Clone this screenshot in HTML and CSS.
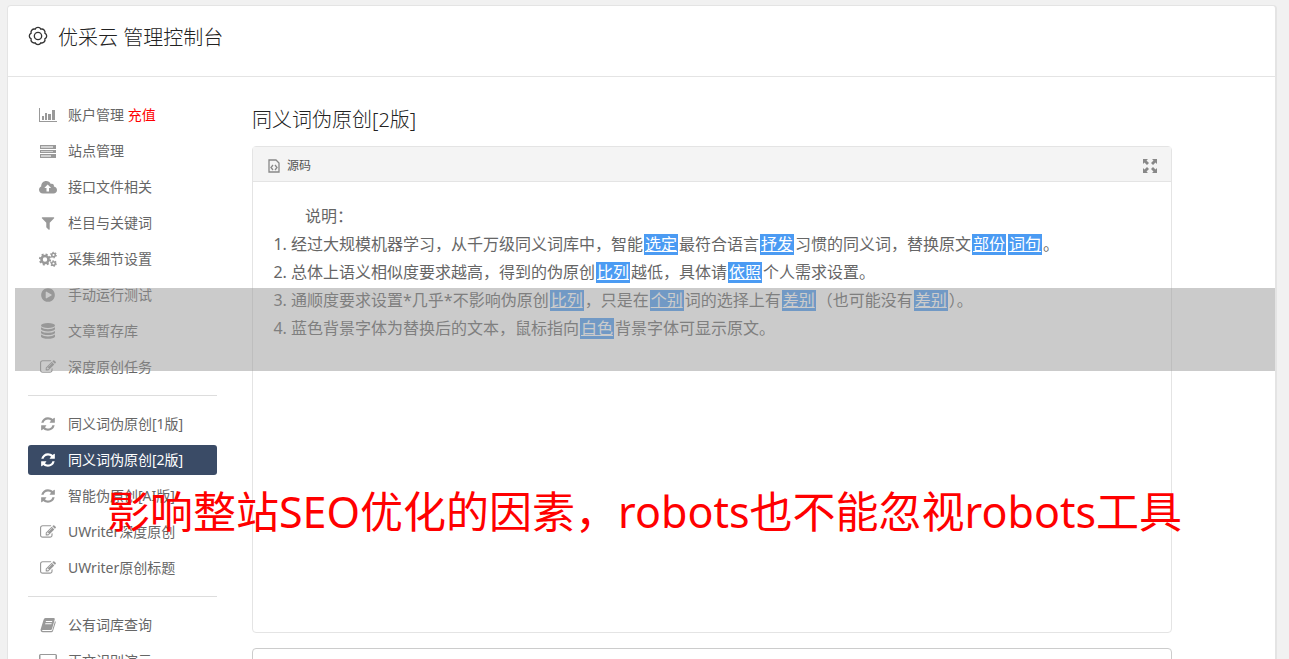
FILE: index.html
```html
<!DOCTYPE html>
<html lang="zh-CN">
<head>
<meta charset="utf-8">
<title>优采云 管理控制台</title>
<link rel="stylesheet" href="styles.css">
</head>
<body>
<svg class="symbols" aria-hidden="true">
  <symbol id="chart" viewBox="0 0 20 16"><path d="M1 1h1v13h17v1H1zM4 9h2v4H4zM7 6h2v7H7zM10 7h3v6h-3zM14 3h3v10h-3z"/></symbol>
  <symbol id="server" viewBox="0 0 20 16"><path opacity=".45" d="M2 2h16v4H2zM2 7h16v3H2zM2 11h16v4H2z"/><path fill-rule="evenodd" d="M2 2h16v4H2zM3 3h12v2H3zM2 7h16v3H2zM3 8h12v1H3zM2 11h16v4H2zM3 12h10v2H3z"/></symbol>
  <symbol id="cloud" viewBox="0 0 20 16"><path fill-rule="evenodd" d="M5 14.500C2.800 14.500 1 13 1 10.800C1 9.200 1.900 8 3.200 7.400C3.200 4.200 5.300 2 8.200 2C10.300 2 12 3.200 12.800 5C14.600 4.200 16.300 5.500 15.900 7.400C17.800 7.700 19 9.200 19 11C19 13 17.500 14.500 15.500 14.500ZM9.700 5.500L6.300 9H8.500V12.500H11V9H13.100Z"/></symbol>
  <symbol id="filter" viewBox="0 0 1792 1792"><path d="M1595 295q17 41-14 70l-493 493v742q0 42-39 59-13 5-25 5-27 0-45-19l-256-256q-19-19-19-45v-486l-493-493q-31-29-14-70 17-39 59-39h1280q42 0 59 39z"/></symbol>
  <symbol id="cogs" viewBox="0 0 20 16">
    <g fill="none" stroke="currentColor"><circle cx="7" cy="8.500" r="3.500" stroke-width="2.600"/><circle cx="7" cy="8.500" r="5.200" stroke-width="1.800" stroke-dasharray="2.040 2.040"/><circle cx="15.500" cy="4" r="1.800" stroke-width="1.500"/><circle cx="15.500" cy="4" r="2.800" stroke-width="1.100" stroke-dasharray="1.460 1.460"/><circle cx="15.500" cy="12.500" r="1.800" stroke-width="1.500"/><circle cx="15.500" cy="12.500" r="2.800" stroke-width="1.100" stroke-dasharray="1.460 1.460"/></g>
  </symbol>
  <symbol id="play" viewBox="0 0 1792 1792"><path d="M896 128q209 0 385.500 103t279.500 279.500 103 385.500-103 385.500-279.500 279.500-385.500 103-385.500-103-279.500-279.500-103-385.500 103-385.500 279.500-279.500 385.500-103zm384 823q32-18 32-55t-32-55l-544-320q-31-19-64-1-32 19-32 56v640q0 37 32 56 16 8 32 8 17 0 32-9z"/></symbol>
  <symbol id="database" viewBox="0 0 16 16"><ellipse cx="8" cy="2.500" rx="7" ry="2.500"/><path d="M1 4.300q2.500 1.900 7 1.900t7-1.900v2q-1.500 2.100-7 2.100t-7-2.100zM1 7.900q2.500 1.900 7 1.900t7-1.900v2q-1.500 2.100-7 2.100t-7-2.100zM1 11.500q2.500 1.900 7 1.900t7-1.900v2.200q-1.500 2.100-7 2.100t-7-2.100z"/></symbol>
  <symbol id="edit" viewBox="0 0 1792 1792"><path d="M888 1184l116-116-152-152-116 116v56h96v96h56zm440-720q-16-16-33 1l-350 350q-17 17-1 33t33-1l350-350q17-17 1-33zm80 594v190q0 119-84.500 203.500t-203.500 84.500h-832q-119 0-203.500-84.500t-84.500-203.500v-832q0-119 84.500-203.500t203.500-84.500h832q63 0 117 25 15 7 18 23 3 17-9 29l-49 49q-14 14-32 8-23-6-45-6h-832q-66 0-113 47t-47 113v832q0 66 47 113t113 47h832q66 0 113-47t47-113v-126q0-13 9-22l64-64q15-15 35-7t20 29zm-96-738l288 288-672 672h-288v-288zm444 132l-92 92-288-288 92-92q28-28 68-28t68 28l152 152q28 28 28 68t-28 68z"/></symbol>
  <symbol id="refresh" viewBox="0 0 1792 1792"><path d="M1639 1056q0 5-1 7-64 268-268 434.500t-478 166.500q-146 0-282.500-55t-243.500-157l-129 129q-19 19-45 19t-45-19-19-45v-448q0-26 19-45t45-19h448q26 0 45 19t19 45-19 45l-137 137q71 66 161 102t187 36q134 0 250-65t186-179q11-17 53-117 8-23 30-23h192q13 0 22.500 9.500t9.500 22.500zm25-800v448q0 26-19 45t-45 19h-448q-26 0-45-19t-19-45 19-45l138-138q-148-137-349-137-134 0-250 65t-186 179q-11 17-53 117-8 23-30 23h-199q-13 0-22.500-9.500t-9.500-22.500v-7q65-268 270-434.500t480-166.500q146 0 284 55.500t245 156.500l130-129q19-19 45-19t45 19 19 45z"/></symbol>
  <symbol id="book" viewBox="0 0 16 16"><path fill-rule="evenodd" d="M5.500 1H14q1 .3.800 1.300L12 12q-.3 1-1.500 1H3q-1 0-1 .5t1 .5h8.300q.7 0 1-.8L15 4q1 .5.700 1.500L13 14q-.4 1.200-1.700 1.200H2.500Q.5 15 .5 12.800L3.500 3Q4 1.200 5.500 1ZM6 4l-.3 1H12l.3-1zM5.400 6.300l-.3 1h6.300l.3-1z"/></symbol>
  <symbol id="monitor" viewBox="0 0 20 16"><path fill-rule="evenodd" d="M2.500 1h15q1.500 0 1.500 1.500v9q0 1.500-1.500 1.500H12l1 2H7l1-2H2.500Q1 13 1 11.500v-9Q1 1 2.500 1zm0 1v8h15V2z"/></symbol>
</svg>

<div class="card">
  <header class="card-header">
    <svg class="title-icon" viewBox="0 0 18 18" aria-hidden="true"><path d="M15.200 11.600A2.900 2.900 0 0 1 11.600 15.200A2.900 2.900 0 0 1 6.400 15.200A2.900 2.900 0 0 1 2.800 11.600A2.900 2.900 0 0 1 2.800 6.400A2.900 2.900 0 0 1 6.400 2.800A2.900 2.900 0 0 1 11.600 2.800A2.900 2.900 0 0 1 15.200 6.400A2.900 2.900 0 0 1 15.200 11.600Z"/><circle cx="9" cy="9" r="3.300"/></svg>
    <h1 class="title">优采云 管理控制台</h1>
  </header>
  <div class="card-body">
    <nav class="sidebar">
      <ul class="menu">
        <li><a class="menu-link" href="#"><svg class="icon wide"><use href="#chart"/></svg><span>账户管理 <span class="recharge">充值</span></span></a></li>
        <li><a class="menu-link" href="#"><svg class="icon wide"><use href="#server"/></svg>站点管理</a></li>
        <li><a class="menu-link" href="#"><svg class="icon wide"><use href="#cloud"/></svg>接口文件相关</a></li>
        <li><a class="menu-link" href="#"><svg class="icon"><use href="#filter"/></svg>栏目与关键词</a></li>
        <li><a class="menu-link" href="#"><svg class="icon wide"><use href="#cogs"/></svg>采集细节设置</a></li>
        <li><a class="menu-link" href="#"><svg class="icon"><use href="#play"/></svg>手动运行测试</a></li>
        <li><a class="menu-link" href="#"><svg class="icon"><use href="#database"/></svg>文章暂存库</a></li>
        <li><a class="menu-link" href="#"><svg class="icon"><use href="#edit"/></svg>深度原创任务</a></li>
      </ul>
      <ul class="menu">
        <li><a class="menu-link" href="#"><svg class="icon"><use href="#refresh"/></svg>同义词伪原创[1版]</a></li>
        <li><a class="menu-link active" href="#" aria-current="page"><svg class="icon"><use href="#refresh"/></svg>同义词伪原创[2版]</a></li>
        <li><a class="menu-link" href="#"><svg class="icon"><use href="#refresh"/></svg>智能伪原创[AI版]</a></li>
        <li><a class="menu-link" href="#"><svg class="icon"><use href="#edit"/></svg>UWriter深度原创</a></li>
        <li><a class="menu-link" href="#"><svg class="icon"><use href="#edit"/></svg>UWriter原创标题</a></li>
      </ul>
      <ul class="menu">
        <li><a class="menu-link" href="#"><svg class="icon"><use href="#book"/></svg>公有词库查询</a></li>
        <li><a class="menu-link" href="#"><svg class="icon wide"><use href="#monitor"/></svg>正文识别演示</a></li>
      </ul>
    </nav>
    <main class="main">
      <h2 class="heading">同义词伪原创[2版]</h2>
      <section class="editor">
        <div class="toolbar">
          <button class="tool" type="button"><svg class="source-icon" viewBox="0 0 12 14" aria-hidden="true"><path d="M1 1h7l3 3v9H1z"/><path d="M5 6L3 8.500L5 11M7 6L9 8.500L7 11"/></svg>源码</button>
          <button class="tool" type="button" aria-label="最大化"><svg class="expand-icon" viewBox="0 0 14 14" aria-hidden="true"><path d="M0 0h5L3.500 1.500L6 4L4 6L1.500 3.500L0 5zM14 0v5l-1.500-1.500L10 6L8 4l2.500-2.500L9 0zM0 14V9l1.500 1.500L4 8l2 2l-2.500 2.500L5 14zM14 14H9l1.500-1.500L8 10l2-2l2.500 2.500L14 9z"/></svg></button>
        </div>
        <div class="content">
          <p class="lead">说明：</p>
          <ol class="notes">
            <li>经过大规模机器学习，从千万级同义词库中，智能<ins class="word">选定</ins>最符合语言<ins class="word">抒发</ins>习惯的同义词，替换原文<ins class="word">部份</ins><ins class="word">词句</ins>。</li>
            <li>总体上语义相似度要求越高，得到的伪原创<ins class="word">比列</ins>越低，具体请<ins class="word">依照</ins>个人需求设置。</li>
            <li>通顺度要求设置*几乎*不影响伪原创<ins class="word">比列</ins>，只是在<ins class="word">个别</ins>词的选择上有<ins class="word">差别</ins>（也可能没有<ins class="word">差别</ins>）。</li>
            <li>蓝色背景字体为替换后的文本，鼠标指向<ins class="word">白色</ins>背景字体可显示原文。</li>
          </ol>
        </div>
      </section>
      <textarea class="result" aria-label="结果"></textarea>
    </main>
  </div>
</div>
<div class="band"></div>
<p class="caption">影响整站SEO优化的因素，robots也不能忽视robots工具</p>
</body>
</html>
```
FILE: styles.css
```css
* { box-sizing: border-box; }
body {
  position: relative;
  height: 100vh;
  margin: 0;
  padding: 5px 12px 0 7px;
  overflow: hidden;
  background: #f1f1f1;
  color: #666;
  font: 400 14px/30px "Noto Sans", "Noto Sans CJK SC", sans-serif;
}
h1, h2, p, ul, ol { margin: 0; padding: 0; font-weight: 400; }
.symbols { position: absolute; width: 0; height: 0; }
.card {
  background: #fff;
  border: 1px solid #e4e4e4;
  border-right-width: 2px;
  border-radius: 4px;
}
.card-header {
  display: flex;
  align-items: flex-start;
  gap: 10px;
  padding: 18px 20px 24px;
  border-bottom: 1px solid #e4e4e4;
}
.title-icon { width: 20px; height: 20px; margin-top: 2px; fill: none; stroke: #333; stroke-width: 1.2; }
.title, .heading { color: #222; font-size: 20px; font-weight: 300; line-height: 28px; }
.card-body {
  display: grid;
  grid-template-columns: 189px 1fr;
  gap: 35px;
  padding: 23px 103px 20px 20px;
}
.menu {
  display: grid;
  gap: 6px;
  list-style: none;
}
.menu + .menu {
  margin-top: 13px;
  padding-top: 13px;
  border-top: 1px solid #ddd;
}
.menu-link {
  display: flex;
  align-items: center;
  gap: 10px;
  height: 30px;
  padding-left: 10px;
  border-radius: 3px;
  color: #666;
  text-decoration: none;
}
.icon { width: 16px; height: 16px; margin: 0 2px; fill: currentColor; color: #999; }
.icon.wide { width: 20px; margin: 0; }
.recharge { color: #f00; }
.active, .active .icon { color: #fff; }
.active { background: #3a4b66; }
.main { padding-top: 6px; }
.heading { margin-bottom: 12px; }
.editor {
  border: 1px solid #e4e4e4;
  border-radius: 4px;
}
.toolbar {
  display: flex;
  align-items: center;
  justify-content: space-between;
  height: 35px;
  padding: 3px 14px 0 15px;
  background: #f4f4f4;
  border-bottom: 1px solid #e4e4e4;
}
.tool {
  display: flex;
  align-items: center;
  gap: 7px;
  padding: 0;
  border: 0;
  background: none;
  color: #555;
  font: inherit;
  font-size: 12px;
}
.source-icon { width: 12px; height: 14px; fill: none; stroke: #888; stroke-width: 1.3; }
.expand-icon { width: 14px; height: 14px; fill: #888; }
.content {
  min-height: 450px;
  padding: 20px;
  font-size: 16px;
  line-height: 28px;
}
.lead { text-indent: 2em; }
.notes { padding-left: 18px; }
.word {
  display: inline-block;
  margin: 0 1px;
  padding: 0 1px;
  background: #4b9bf3;
  color: #fff;
  line-height: 21px;
  text-decoration: underline;
}
.result {
  display: block;
  width: 100%;
  height: 200px;
  margin-top: 15px;
  border: 1px solid #ccc;
  border-radius: 4px;
  resize: none;
}
.band {
  position: absolute;
  top: 288px;
  right: 14px;
  left: 15px;
  height: 83px;
  background: rgba(151, 151, 151, 0.5);
}
.caption {
  position: absolute;
  top: 482px;
  right: 0;
  left: 0;
  color: #f00;
  font-size: 43px;
  line-height: 60px;
  text-align: center;
  white-space: nowrap;
}
```
